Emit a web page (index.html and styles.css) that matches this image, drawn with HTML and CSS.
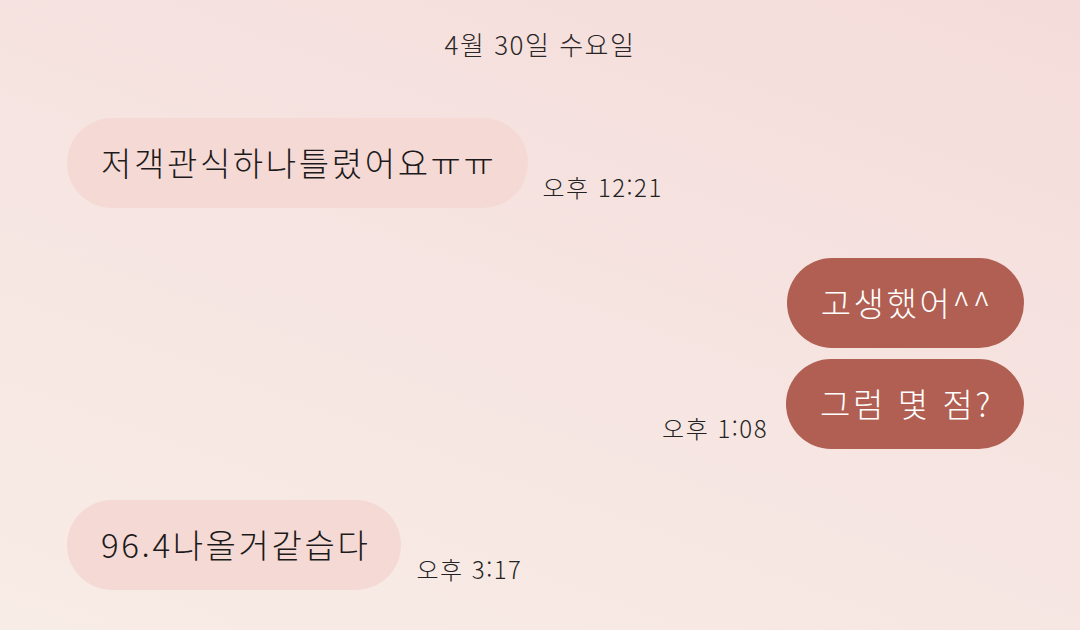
FILE: index.html
```html
<!DOCTYPE html>
<html lang="ko">
<head>
  <meta charset="UTF-8" />
  <title>채팅</title>
  <link rel="stylesheet" href="styles.css">
</head>
<body>
  <div class="chat">
    <div class="date">4월 30일 수요일</div>

    <!-- 받은 메시지 -->
    <div class="row in">
      <div class="bubble">저객관식하나틀렸어요ㅠㅠ</div>
      <span class="time">오후 12:21</span>
    </div>

    <!-- 보낸 메시지 -->
    <div class="group">
      <div class="row out">
        <div class="bubble">고생했어^^</div>
      </div>
      <div class="row out">
        <span class="time">오후 1:08</span>
        <div class="bubble">그럼 몇 점?</div>
      </div>
    </div>

    <div class="row in">
      <div class="bubble">96.4나올거같습다</div>
      <span class="time">오후 3:17</span>
    </div>
  </div>
</body>
</html>
```

FILE: styles.css
```css
:root {
  --bubble-in: #f5d9d5;
  --bubble-out: #b05f52;
  --text: #1c1a1a;
  --font-main: "Noto Sans CJK KR", "Noto Sans", sans-serif;
}

* {
  margin: 0;
  padding: 0;
  box-sizing: border-box;
}

body {
  width: 1080px;
  height: 630px;
  overflow: hidden;
  font-family: var(--font-main);
  font-weight: 300;
  color: var(--text);
  background: linear-gradient(200deg, #f4dcda 0%, #f6e4e1 45%, #f8ece6 100%);
}

.chat {
  display: flex;
  flex-direction: column;
  padding: 26px 56px 0 67px;
}

.date {
  text-align: center;
  font-size: 26px;
  line-height: 36px;
  letter-spacing: 1.5px;
  color: #2a2626;
  margin: 0 0 56px -67px;
  padding-left: 56px;
}

.group {
  display: flex;
  flex-direction: column;
  gap: 11px;
  margin: 50px 0 51px;
}

.row {
  display: flex;
  align-items: flex-end;
}

.row.out {
  justify-content: flex-end;
}

.bubble {
  height: 90px;
  border-radius: 45px;
  padding: 0 31px 0 34px;
  font-size: 33px;
  line-height: 88px;
  letter-spacing: 2.6px;
  white-space: nowrap;
}

.in .bubble {
  background: var(--bubble-in);
}

.out .bubble {
  background: var(--bubble-out);
  color: #fff;
}

.time {
  font-size: 24px;
  line-height: 30px;
  letter-spacing: 1.5px;
  margin-bottom: 6px;
  color: #222;
}

.in .time {
  margin-left: 15px;
}

.out .time {
  margin-right: 18px;
}
```
